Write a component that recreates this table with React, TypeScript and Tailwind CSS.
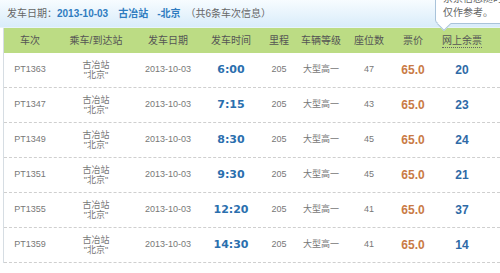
const trains = [
  { no: 'PT1363', time: '6:00', seats: 47, left: 20 },
  { no: 'PT1347', time: '7:15', seats: 43, left: 23 },
  { no: 'PT1349', time: '8:30', seats: 45, left: 24 },
  { no: 'PT1351', time: '9:30', seats: 45, left: 21 },
  { no: 'PT1355', time: '12:20', seats: 41, left: 37 },
  { no: 'PT1359', time: '14:30', seats: 41, left: 14 },
]

const cols = 'grid grid-cols-[52px_80px_64px_62px_34px_50px_46px_42px_56px_1fr]'

export default function App() {
  return (
    <div
      className="relative w-[500px] h-[273px] overflow-hidden bg-white"
      style={{ fontFamily: '"Liberation Sans", "Noto Sans CJK SC", sans-serif' }}
    >
      {/* Date bar */}
      <div className="h-[28px] flex items-center px-[7px] text-[10px] bg-gradient-to-b from-[#f7fcff] to-[#d9ecfa] border-b border-[#e9f3fb] text-[#666]">
        <span>发车日期：</span>
        <span className="font-bold text-[#2f7cc0]">2013-10-03</span>
        <span className="ml-[10px] font-bold text-[#2f7cc0]">古冶站</span>
        <span className="ml-[9px] font-bold text-[#2f7cc0]">-北京</span>
        <span className="ml-[5px]">（共6条车次信息）</span>
      </div>

      {/* Table */}
      <div className="ml-[3px] border-l border-[#d6dde3]">
        <div className={`${cols} h-[25px] items-center bg-[#bcdc84] text-[10px] text-[#555] text-center`}>
          <span>车次</span>
          <span>乘车/到达站</span>
          <span>发车日期</span>
          <span>发车时间</span>
          <span>里程</span>
          <span>车辆等级</span>
          <span>座位数</span>
          <span>票价</span>
          <span>
            <span className="border-b border-dotted border-[#666] pb-[1px]">网上余票</span>
          </span>
          <span />
        </div>

        {trains.map((t) => (
          <div
            key={t.no}
            className={`${cols} h-[35px] items-center text-center text-[9px] text-[#777] border-b border-dashed border-[#cfcfcf]`}
          >
            <span>{t.no}</span>
            <span className="flex flex-col leading-[10px]">
              <span>古冶站</span>
              <span>"北京"</span>
            </span>
            <span>2013-10-03</span>
            <span
              className="font-bold text-[11px] text-[#2b6fae]"
              style={{ fontFamily: '"DejaVu Sans", sans-serif' }}
            >
              {t.time}
            </span>
            <span>205</span>
            <span>大型高一</span>
            <span>{t.seats}</span>
            <span className="font-bold text-[12px] text-[#c97a45]">65.0</span>
            <span className="font-bold text-[12px] text-[#2e6aa6]">{t.left}</span>
            <span />
          </div>
        ))}
      </div>

      {/* Tooltip */}
      <div className="absolute left-[435px] top-[-12px] w-[90px] h-[36px] bg-white border border-[#a9c3da] rounded-[4px] px-[7px] pt-[3px] text-[10px] leading-[14px] text-[#666] whitespace-nowrap">
        <div>余票信息随时变动，</div>
        <div>仅作参考。</div>
        <div className="absolute left-[3px] bottom-[-6px] w-[10px] h-[10px] bg-white border-r border-b border-[#a9c3da] rotate-45" />
      </div>
    </div>
  )
}
